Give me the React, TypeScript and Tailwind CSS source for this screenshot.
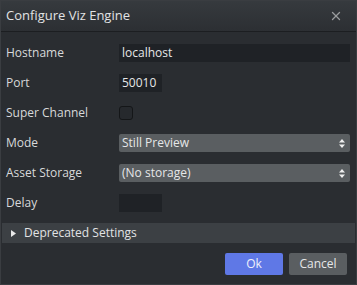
import { X } from "lucide-react";

const font = { fontFamily: '"Open Sans", "Noto Sans", sans-serif' };

function Row({ label, children }: { label: string; children: React.ReactNode }) {
  return (
    <div className="flex h-[30px] items-center">
      <div className="w-[113px] shrink-0 text-[12px] text-[#d8d9da]">{label}</div>
      {children}
    </div>
  );
}

function Select({ value }: { value: string }) {
  return (
    <div className="flex h-[18px] flex-1 items-center justify-between rounded-[2px] bg-[#5a5e61] pl-[3px] pr-[5px] text-[12px] text-[#e6e7e8]">
      <span>{value}</span>
      <svg width="6" height="9" viewBox="0 0 6 9" fill="#f0f0f0">
        <path d="M3 0 L6 3.5 H0 Z" />
        <path d="M0 5.5 H6 L3 9 Z" />
      </svg>
    </div>
  );
}

export default function App() {
  return (
    <div
      className="flex h-[285px] w-[357px] flex-col border border-[#3a3d41] bg-[#2a2d31]"
      style={font}
    >
      {/* Title bar */}
      <div className="flex h-[31px] shrink-0 items-center justify-between border-b border-[#1c1e21] bg-gradient-to-b from-[#363a3e] to-[#2c2f33] pl-[5px] pr-[13px]">
        <span className="text-[13px] text-[#e2e3e4]">Configure Viz Engine</span>
        <X size={14} strokeWidth={2.25} className="text-[#9a9c9e]" />
      </div>

      {/* Fields */}
      <div className="flex flex-col pl-[5px] pr-[6px] pt-[6px]">
        <Row label="Hostname">
          <div className="flex h-[18px] flex-1 items-center bg-[#1f2226] pl-[3px] text-[12px] text-[#e6e7e8]">
            localhost
          </div>
        </Row>
        <Row label="Port">
          <div className="flex h-[18px] w-[43px] items-center bg-[#1f2226] pl-[3px] text-[12px] text-[#e6e7e8]">
            50010
          </div>
        </Row>
        <Row label="Super Channel">
          <div className="h-[14px] w-[14px] rounded-[3px] border border-[#141618] bg-[#26292d]" />
        </Row>
        <Row label="Mode">
          <Select value="Still Preview" />
        </Row>
        <Row label="Asset Storage">
          <Select value="(No storage)" />
        </Row>
        <Row label="Delay">
          <div className="h-[18px] w-[43px] bg-[#1f2226]" />
        </Row>
      </div>

      {/* Deprecated settings */}
      <div className="mx-[1px] mt-[5px] flex h-[20px] items-center gap-[8px] bg-[#3c4044] pl-[9px] text-[12px] text-[#e2e3e4]">
        <svg width="5" height="7" viewBox="0 0 5 7" fill="#e8e8e8">
          <path d="M0 0 L5 3.5 L0 7 Z" />
        </svg>
        <span>Deprecated Settings</span>
      </div>

      {/* Buttons */}
      <div className="mt-[10px] flex justify-end gap-[6px] pr-[9px]">
        <button className="h-[22px] w-[58px] rounded-[2px] bg-[#5f78e6] text-[12px] text-[#eef0fb]">
          Ok
        </button>
        <button className="h-[22px] w-[58px] rounded-[2px] bg-[#5a5e61] text-[12px] text-[#e6e7e8]">
          Cancel
        </button>
      </div>
    </div>
  );
}
